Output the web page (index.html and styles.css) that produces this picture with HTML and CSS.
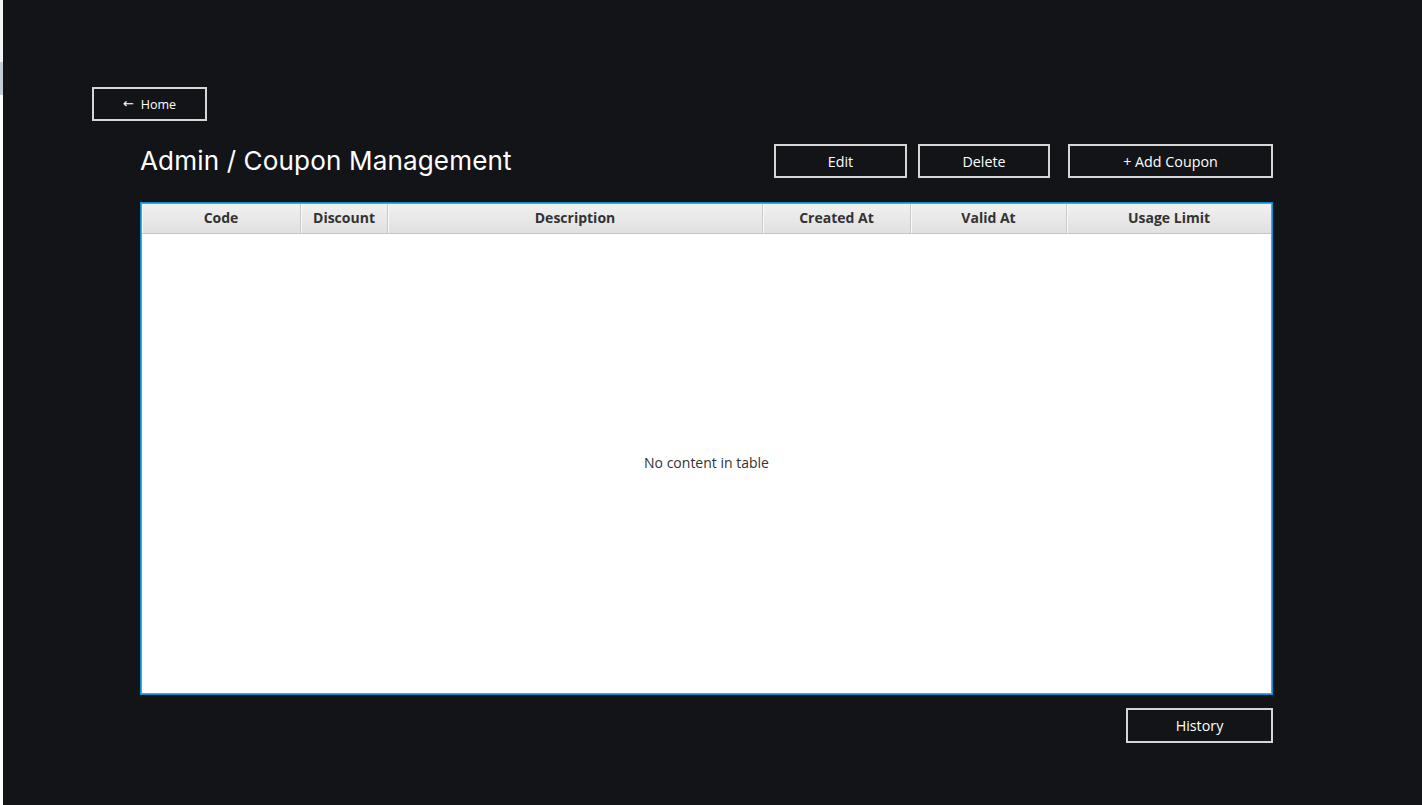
FILE: index.html
```html
<!DOCTYPE html>
<html>
<head>
<meta charset="utf-8">
<link rel="stylesheet" href="styles.css">
</head>
<body>
<div class="app">
  <div class="strip">
    <div class="strip-top"></div>
    <div class="strip-band"></div>
    <div class="strip-rest"></div>
  </div>
  <div class="main">
    <button class="btn home-btn"><span class="arrow">&larr;</span>Home</button>
    <div class="content">
      <div class="toolbar">
        <h1 class="title">Admin / Coupon Management</h1>
        <div class="actions">
          <button class="btn edit-btn">Edit</button>
          <button class="btn delete-btn">Delete</button>
          <button class="btn add-btn">+ Add Coupon</button>
        </div>
      </div>
      <div class="table">
        <div class="thead">
          <div class="th c-code">Code</div>
          <div class="th c-discount">Discount</div>
          <div class="th c-desc">Description</div>
          <div class="th c-created">Created At</div>
          <div class="th c-valid">Valid At</div>
          <div class="th c-usage">Usage Limit</div>
        </div>
        <div class="tbody">No content in table</div>
      </div>
      <div class="footer">
        <button class="btn history-btn">History</button>
      </div>
    </div>
  </div>
</div>
</body>
</html>
```
FILE: styles.css
```css
html, body {
  margin: 0;
  padding: 0;
  background: #131417;
}
.app {
  display: flex;
  width: 1422px;
  height: 805px;
  overflow: hidden;
}
.strip {
  width: 3px;
  flex: none;
  display: flex;
  flex-direction: column;
}
.strip-top { height: 62px; background: #f3f3f3; }
.strip-band { height: 33px; background: #c4ccd6; }
.strip-rest { flex: 1; background: #ffffff; }
.main {
  flex: 1;
  padding: 87px 0 0 89px;
  box-sizing: border-box;
}
.btn {
  background: #131417;
  color: #ffffff;
  border: 2px solid #d6d6d6;
  font-family: "Open Sans", "Noto Sans", sans-serif;
  font-size: 14.3px;
  padding: 0;
  margin: 0;
  box-sizing: border-box;
  display: flex;
  align-items: center;
  justify-content: center;
}
.home-btn {
  width: 115px;
  height: 34px;
  font-size: 12.5px;
}
.arrow {
  font-family: "DejaVu Sans", sans-serif;
  font-size: 13px;
  margin-right: 7px;
  position: relative;
  top: -1px;
}
.content {
  margin-left: 48px;
  width: 1133px;
  margin-top: 23px;
}
.toolbar {
  display: flex;
  align-items: center;
  justify-content: space-between;
  height: 34px;
}
.title {
  margin: 0;
  font-family: Inter, "Noto Sans", sans-serif;
  font-weight: 400;
  font-size: 26.1px;
  color: #ffffff;
  letter-spacing: 0.12px;
  position: relative;
  top: -1px;
}
.actions {
  display: flex;
  align-items: center;
}
.edit-btn { width: 133px; height: 34px; }
.delete-btn { width: 132px; height: 34px; margin-left: 11px; }
.add-btn { width: 205px; height: 34px; margin-left: 18px; }
.table {
  margin-top: 24px;
  height: 493px;
  box-sizing: border-box;
  border: 1px solid #0c8ccc;
  box-shadow: inset 0 0 0 1px #27b2ea;
  background: #ffffff;
  padding: 1px;
  display: flex;
  flex-direction: column;
}
.thead {
  display: flex;
  height: 30px;
  flex: none;
  background: linear-gradient(#f1f1f1, #e0e0e0);
  border-bottom: 1px solid #c6c6c6;
  box-sizing: border-box;
}
.th {
  display: flex;
  align-items: center;
  justify-content: center;
  font-family: "Open Sans", "Noto Sans", sans-serif;
  font-weight: 700;
  font-size: 14px;
  color: #333333;
  box-sizing: border-box;
  border-right: 1px solid #c9c9c9;
  box-shadow: inset 1px 0 0 #fafafa;
  padding-bottom: 3px;
}
.c-code { width: 159px; }
.c-discount { width: 87px; }
.c-desc { width: 375px; }
.c-created { width: 148px; }
.c-valid { width: 156px; }
.c-usage { flex: 1; border-right: none; }
.tbody {
  flex: 1;
  display: flex;
  align-items: center;
  justify-content: center;
  font-family: "Open Sans", "Noto Sans", sans-serif;
  font-size: 14px;
  color: #333333;
  padding-bottom: 3px;
}
.footer {
  display: flex;
  justify-content: flex-end;
  margin-top: 13px;
}
.history-btn { width: 147px; height: 35px; }
```
